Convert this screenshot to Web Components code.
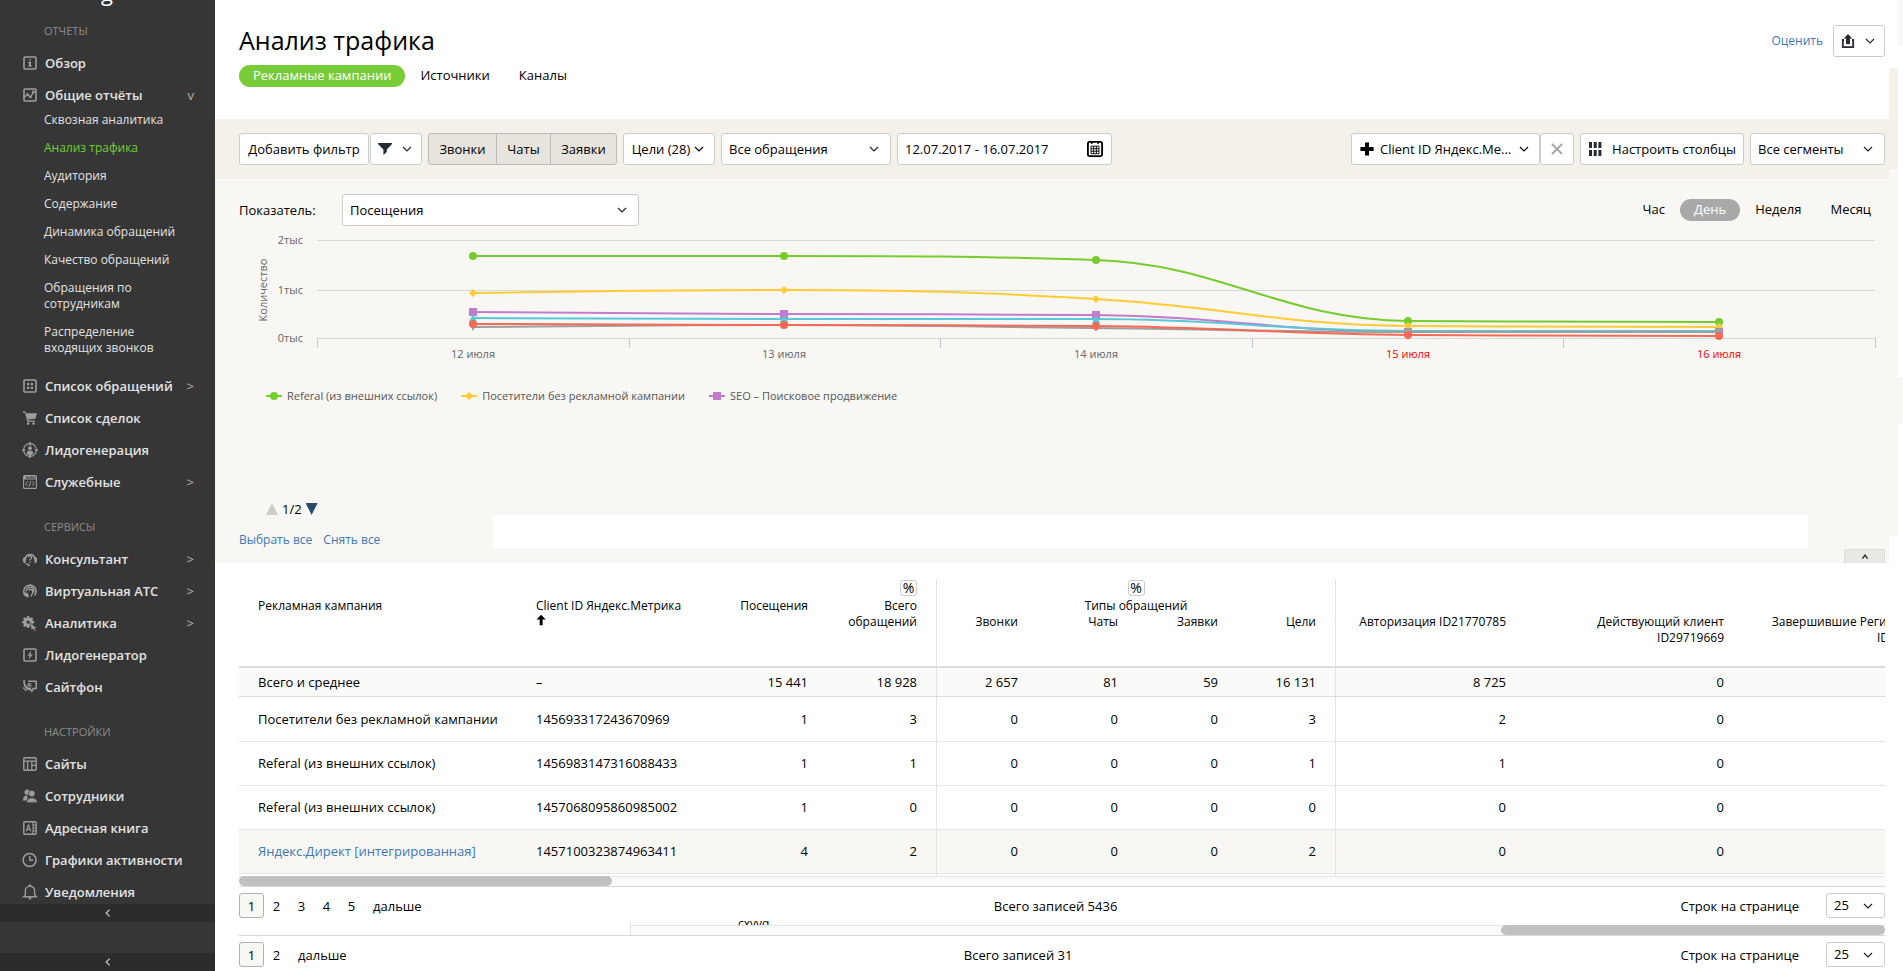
<!DOCTYPE html>
<html lang="ru">
<head>
<meta charset="utf-8">
<title>Анализ трафика</title>
<style>
  body { margin: 0; font: 13px/16px "Open Sans", "Noto Sans", sans-serif; color: #000; background: #fff; }
</style>
</head>
<body>
<traffic-app></traffic-app>

<script>
const define = (name, html, setup) => {
  const tpl = document.createElement('template');
  tpl.innerHTML = html;
  customElements.define(name, class extends HTMLElement {
    connectedCallback() {
      if (this.shadowRoot) return;
      const root = this.attachShadow({ mode: 'open' });
      root.append(tpl.content.cloneNode(true));
      if (setup) setup(this, root);
    }
  });
};

/* ---------- icons ---------- */
const S = 'fill="none" stroke="currentColor"';
const BOX = `<rect x="1" y="1" width="12" height="12" rx="1" ${S} stroke-width="1.6"/>`;
const ICONS = {
  info: BOX + `<path d="M6.2 3.2h1.8v1.4H6.2zM5.2 5.8H8v3.6h1v1.2H5V9.4h1V7h-.8z" fill="currentColor"/>`,
  graph: BOX + `<path d="M1.5 9l3-2.6 3 2.8 3-5.2" ${S} stroke-width="1.3"/><circle cx="4.5" cy="6.4" r="1.2"/><circle cx="7.5" cy="9" r="1.2"/><circle cx="10.4" cy="4" r="1.4"/>`,
  list: BOX + `<path d="M4 4h2.3v2.3H4zM7.8 4H10v2.3H7.8zM4 7.8h2.3V10H4zM7.8 7.8H10V10H7.8z"/>`,
  cart: `<path d="M0 .6h2.6l.6 1.6H14l-1.6 5.6-7.4.8.4 1H12v1.2H4.4L2 1.9H0z"/><circle cx="5.2" cy="12.6" r="1.3"/><circle cx="10.6" cy="12.6" r="1.3"/>`,
  target: `<circle cx="7" cy="7" r="6.4" ${S} stroke-width="1.1"/><circle cx="7" cy="5.2" r="1.9"/><path d="M3.6 11c0-2.4 1.400-3.400 3.400-3.400s3.400 1 3.400 3.400L7 12.800zM6.300-1h1.400v3.400H6.300zM6.300 12h1.400v3H6.300zM-1 6.300h3.200v1.400H-1zM11.800 6.300H15v1.400h-3.200z"/>`,
  code: `<rect x=".6" y=".6" width="12.800" height="12.800" rx="1" ${S} stroke-width="1.100"/><path d="M1 1h2.400v2.400H1zM4.400 1.200h4v1.400h-4zM1 3.400h12v1H1zM9.600 1h1v2h-1zM11.400 1h1v2h-1z"/><path d="M4.600 6.400L2.800 8.600l1.800 2.200M9.400 6.400l1.800 2.200-1.800 2.200M7.800 6l-1.600 5.400" ${S}/>`,
  consultant: `<path d="M2.400 8.600V6.400a4.800 4.800 0 0 1 9.400 0v2.200" ${S} stroke-width="1.600"/><path d="M0 7.200C0 5.600 1 5 2.600 5v6.600C1 11.400 0 10 0 9zM14 7.200C14 5.600 13 5 11.600 5v6.600C13 11.400 14 10 14 9z"/><path d="M5.200 5.400c.2-2.400 3.800-2 3.500.1C8.500 6.900 7 6.800 7 8.400M3.600 11.400c.6 1.400 1.800 1.800 3.400 1.800" ${S} stroke-width="1.400"/><circle cx="7" cy="10.300" r=".8"/>`,
  pbx: `<path d="M3 12.200A6.200 6.200 0 1 1 11.600 11.400M3.400 7.400A3.700 3.700 0 1 1 10.400 8.600" ${S} stroke-width="1.600"/><path d="M5.400 6.200c2.800-1.800 5.600.4 4 3.400L8 12.600" ${S} stroke-width="1.300"/><path d="M1.400 8l3.400 1.200L6 12l-1 1.600C3 13 1.600 11 1.400 8z"/>`,
  gears: `<path d="M4.200 0h1.800l.3 1.500 1.300.5L9 1.200l1.100 1.200-.7 1.300.5 1.300 1.400.3v1.600l-1.400.3-.5 1.200.6 1.300L8.800 11l-1.300-.8-1.300.5L6 12H4.200l-.3-1.300-1.300-.5-1.300.8L.1 9.700l.8-1.300L.4 7.200-1 6.900V5.300L.4 5l.5-1.300-.8-1.300L1.300 1.200 2.600 2l1.300-.5z"/><circle cx="5.100" cy="6.100" r="1.700" fill="#363636"/><path d="M7 7l6.800 4.800-2 .6 1.400 2.200-1.600.6-1.200-2.300L8.400 14z" stroke="#363636" stroke-width=".6"/>`,
  bolt: BOX + `<path d="M8.400 2.600L4.400 7.600h2.200l-.8 4 4-5.200H7.500z"/>`,
  phone: `<path d="M5 1.200h8.200v7.400h-3L8.600 12V9.400" ${S} stroke-width="1.500"/><path d="M8.200 3.800H5.600c-1 0-1 2 0 2h3" ${S} stroke-width="1.200"/><path d="M.4 0l2 .2-.6 2C2.200 4.600 3.600 6.600 5.600 7.600l2.200-.2.600 2.400-1.800.6C3 10-.4 5.600.4 0z"/><path d="M.2 7.600c.8 1.600 1.800 2.400 3.400 3" ${S} stroke-width="1.200"/>`,
  layout: `<rect x=".8" y=".8" width="12.400" height="12.400" rx="1" ${S} stroke-width="1.400"/><path d="M1 4.200h12M4.600 4.200V13M8.800 4.200V13M8.800 8.400H13" ${S} stroke-width="1.200"/>`,
  people: `<circle cx="4.200" cy="3.200" r="2.600"/><path d="M0 11.600C0 8.400 1.400 6.600 4.400 6.600v5z"/><g stroke="#363636" stroke-width=".8"><circle cx="8.800" cy="4.600" r="3.300"/><path d="M3.600 13.800c0-3 1.800-5 5.200-5s5.600 2 5.600 5z"/></g>`,
  book: `<rect x=".8" y=".8" width="12.400" height="12.400" rx="1" ${S} stroke-width="1.400"/><path d="M10 1v12M10 4h3M10 7h3M10 10h3M3.300 10.200L5.500 4l2.200 6.200M4 8.400h3" ${S} stroke-width="1.100"/>`,
  clock: `<circle cx="6.600" cy="7" r="6.500" ${S} stroke-width="1.500"/><path d="M6.800 3v4.300h3.600" ${S} stroke-width="1.400"/>`,
  bell: `<path d="M.6 11.800h12.800L11.600 9.600V5.400C11.600 3 9.600 1.400 7 1.400S2.400 3 2.400 5.400v4.200z" ${S} stroke-width="1.400"/><path d="M5.800-.6h2.400v2H5.800zM5 12.400h4L7.600 14.600H6.400z"/>`,
  down: `<path d="M3 5l4 4 4-4" ${S} stroke-width="1.200"/>`,
  up: `<path d="M4.400 8.600L7 5l2.600 3.600" ${S} stroke-width="1.300"/>`,
  left: `<path d="M8.600 3.600L5.200 7l3.400 3.400" ${S} stroke-width="1.300"/>`,
  funnel: `<path d="M0 1h14v1L8.800 7.600V10L5.400 13V7.600L0 2z"/>`,
  plus: `<path d="M5 .6h4V5h4.600v4H9v4.600H5V9H.4V5H5z"/>`,
  cross: `<path d="M2 2l10 10M12 2L2 12" ${S} stroke-width="1.800"/>`,
  columns: `<path d="M1 0h3v6H1zM5.700 0h3v6h-3zM10.400 0h3v6h-3zM1 8h3v6H1zM5.700 8h3v6h-3zM10.400 8h3v6h-3z"/>`,
  export: `<path d="M7 0l4.200 4.600H9V10H5V4.600H2.800z"/><path d="M3 6H1.800v7.200h10.400V6H11" ${S} stroke-width="1.800"/>`,
  calendar: `<rect x=".8" y=".8" width="12.400" height="12.400" rx="1.600" fill="#fff" stroke="currentColor" stroke-width="1.600"/><path d="M3.600 0h1.200v2.600H3.600zM9.200 0h1.200v2.600H9.200z"/><path d="M3.500 4.500h7v6.600h-7zM3.500 6.700h7M3.500 8.900h7M5.800 4.500v6.600M8.200 4.500v6.600" ${S} stroke-width=".8"/>`,
  sort: `<path d="M6 1l5.400 5.400H7.700V13H4.300V6.400H.6z"/>`,
};
define('ui-icon', `<style>:host{display:inline-flex;flex:none;width:14px;height:14px}svg{display:block;width:100%;height:100%;overflow:visible}</style>`,
  (el, root) => root.innerHTML += `<svg viewBox="0 0 14 14" fill="currentColor" aria-hidden="true">${ICONS[el.getAttribute('name')]}</svg>`);

/* ---------- sidebar ---------- */
define('nav-item', `<style>
  :host{display:block}
  a{display:flex;align-items:center;height:32px;padding:0 21px 0 23px;gap:8px;color:#e2e2e2;text-decoration:none;font-weight:600}
  ui-icon{color:#9d9d9d}
  span{flex:1;white-space:nowrap}
  i{font-style:normal;font-weight:400;color:#b4b4b4}
</style><a href="#"><span><slot></slot></span></a>`, (el, root) => {
  const link = root.querySelector('a');
  const icon = document.createElement('ui-icon');
  icon.setAttribute('name', el.getAttribute('icon'));
  link.prepend(icon);
  if (el.hasAttribute('mark')) {
    const i = document.createElement('i');
    i.textContent = el.getAttribute('mark');
    link.append(i);
  }
});
define('nav-sub', `<style>
  :host{display:block;padding-bottom:12px}
  a{display:block;width:144px;color:#e2e2e2;text-decoration:none;font-size:12px;line-height:16px}
  :host([active]) a{color:#6fce36}
</style><a href="#"><slot></slot></a>`);
define('nav-heading', `<style>
  :host{display:block;height:24px;padding:21px 0 0 44px;color:#8c8c8c;font-size:11px;line-height:16px}
</style><slot></slot>`);
define('side-nav', `<style>
  :host{display:flex;flex-direction:column;flex:none;width:215px;height:100vh;min-height:600px;background:#363636;color:#fff}
  nav{flex:1;min-height:0;overflow:hidden}
  .logo{display:flex;height:2px;padding-left:101px;align-items:flex-end;font-size:22px;line-height:20px}
  .subs{padding:1px 0 2px 44px}
  button{display:flex;flex:none;align-items:center;justify-content:center;height:18px;border:0;padding:0;background:#2c2c2c;color:#c4c4c4}
  .gap{flex:none;height:31px}
</style>
<nav>
  <div class="logo">g</div>
  <nav-heading>ОТЧЕТЫ</nav-heading>
  <nav-item icon="info">Обзор</nav-item>
  <nav-item icon="graph" mark="v">Общие отчёты</nav-item>
  <div class="subs">
    <nav-sub>Сквозная аналитика</nav-sub><nav-sub active>Анализ трафика</nav-sub><nav-sub>Аудитория</nav-sub>
    <nav-sub>Содержание</nav-sub><nav-sub>Динамика обращений</nav-sub><nav-sub>Качество обращений</nav-sub>
    <nav-sub>Обращения по<br>сотрудникам</nav-sub><nav-sub>Распределение<br>входящих звонков</nav-sub>
  </div>
  <nav-item icon="list" mark="&gt;">Список обращений</nav-item>
  <nav-item icon="cart">Список сделок</nav-item>
  <nav-item icon="target">Лидогенерация</nav-item>
  <nav-item icon="code" mark="&gt;">Служебные</nav-item>
  <nav-heading>СЕРВИСЫ</nav-heading>
  <nav-item icon="consultant" mark="&gt;">Консультант</nav-item>
  <nav-item icon="pbx" mark="&gt;">Виртуальная АТС</nav-item>
  <nav-item icon="gears" mark="&gt;">Аналитика</nav-item>
  <nav-item icon="bolt">Лидогенератор</nav-item>
  <nav-item icon="phone">Сайтфон</nav-item>
  <nav-heading>НАСТРОЙКИ</nav-heading>
  <nav-item icon="layout">Сайты</nav-item>
  <nav-item icon="people">Сотрудники</nav-item>
  <nav-item icon="book">Адресная книга</nav-item>
  <nav-item icon="clock">Графики активности</nav-item>
  <nav-item icon="bell">Уведомления</nav-item>
</nav>
<button aria-label="Свернуть меню"><ui-icon name="left"></ui-icon></button>
<div class="gap"></div>
<button aria-label="Свернуть панель"><ui-icon name="left"></ui-icon></button>`);

/* ---------- controls ---------- */
define('ui-button', `<style>
  :host{display:inline-flex;height:32px}
  button{flex:1;box-sizing:border-box;display:flex;align-items:center;justify-content:center;gap:var(--gap,5px);padding:0 var(--pad,8px) 1px;border:1px solid #ccc;border-radius:3px;background:#fff;color:inherit;font:inherit;white-space:nowrap}
</style><button><slot></slot></button>`, (el, root) => {
  if (el.hasAttribute('label')) root.querySelector('button').setAttribute('aria-label', el.getAttribute('label'));
});
define('ui-select', `<style>
  :host{display:inline-flex;position:relative;height:32px}
  select{appearance:none;box-sizing:border-box;width:100%;height:100%;margin:0;padding:0 28px 1px 7px;border:1px solid #ccc;border-radius:3px;background:#fff;color:inherit;font:inherit}
  ui-icon{position:absolute;right:10px;top:0;bottom:0;margin:auto;pointer-events:none;color:#222}
</style><select><option></option></select><ui-icon name="down"></ui-icon>`, (el, root) => {
  root.querySelector('option').textContent = el.getAttribute('value');
  root.querySelector('select').setAttribute('aria-label', el.getAttribute('label'));
});
define('pill-tabs', `<style>
  :host{display:flex;gap:1px}
  ::slotted(a){box-sizing:border-box;height:22px;padding:2px 14px;border-radius:11px;color:#000;text-decoration:none;line-height:16px;white-space:nowrap}
  ::slotted(a[aria-current]){background:var(--pill);color:#fff}
</style><slot></slot>`);

define('page-header', `<style>
  :host{display:flex;justify-content:space-between;height:94px;padding:25px 18px 0 24px}
  h1{margin:0 0 10px;font-size:25px;line-height:30px;font-weight:400}
  pill-tabs{--pill:#77cc38}
  .side{display:flex;align-items:center;gap:10px;height:32px}
  .side a{color:#3f78b5;text-decoration:none;font-size:12px}
  ui-button{width:52px;color:#262b33;--gap:8px;--pad:6px}
</style>
<div><h1>Анализ трафика</h1>
<pill-tabs><a href="#" aria-current="page">Рекламные кампании</a><a href="#">Источники</a><a href="#">Каналы</a></pill-tabs></div>
<div class="side"><a href="#">Оценить</a><ui-button label="Экспорт"><ui-icon name="export"></ui-icon><ui-icon name="down"></ui-icon></ui-button></div>`);

define('filter-bar', `<style>
  :host{display:flex;align-items:center;height:60px;padding:0 18px 0 24px;background:#f3f1e9;border-bottom:1px solid #fff}
  .add{width:130px;margin-right:1px}
  .funnel{width:52px;margin-right:6px;color:#262b33;--gap:8px;--pad:6px}
  .group{display:flex;margin-right:6px}
  .group button{box-sizing:border-box;height:32px;padding:0 0 1px;border:1px solid #bcbbb7;margin-right:-1px;background:#e6e4dd;font:inherit;color:#000}
  .group button:first-child{width:69px;border-radius:3px 0 0 3px}
  .group button:nth-child(2){width:55px}
  .group button:last-child{width:67px;margin:0;border-radius:0 3px 3px 0}
  .goals{width:92px;margin-right:6px;--gap:2px;--pad:4px}
  .calls{width:170px;margin-right:6px}
  .date{box-sizing:border-box;display:flex;align-items:center;width:215px;height:32px;padding:0 8px 0 7px;border:1px solid #ccc;border-radius:3px;background:#fff}
  .date input{flex:1;min-width:0;border:0;padding:0;background:none;color:#000;font:inherit}
  .date ui-icon{width:16px;height:16px}
  .client{width:188px;margin:0 1px 0 auto;--gap:6px}
  .clear{width:34px;margin-right:6px;color:#a5a5a5}
  .columns{width:164px;margin-right:6px;--gap:10px;--pad:7px}
  .columns ui-icon{color:#262b33}
  .segments{width:135px}
</style>
<ui-button class="add">Добавить фильтр</ui-button>
<ui-button class="funnel" label="Фильтры"><ui-icon name="funnel"></ui-icon><ui-icon name="down"></ui-icon></ui-button>
<div class="group"><button>Звонки</button><button>Чаты</button><button>Заявки</button></div>
<ui-button class="goals">Цели (28)<ui-icon name="down"></ui-icon></ui-button>
<ui-select class="calls" label="Обращения" value="Все обращения"></ui-select>
<label class="date"><input aria-label="Период" value="12.07.2017 - 16.07.2017"><ui-icon name="calendar"></ui-icon></label>
<ui-button class="client"><ui-icon name="plus"></ui-icon>Client ID Яндекс.Ме...<ui-icon name="down"></ui-icon></ui-button>
<ui-button class="clear" label="Убрать"><ui-icon name="cross"></ui-icon></ui-button>
<ui-button class="columns"><ui-icon name="columns"></ui-icon>Настроить столбцы</ui-button>
<ui-select class="segments" label="Сегменты" value="Все сегменты"></ui-select>`);

/* ---------- chart ---------- */
const SERIES = [
  { color: '#76cc2c', mark: 'circle', y: [30, 30, 34, 95, 96] },
  { color: '#ffcb33', mark: 'diamond', y: [67, 64, 73, 100, 101] },
  { color: '#c27ccb', mark: 'square', y: [86, 88, 89, 106, 106] },
  { color: '#57c8d8', mark: 'triangle', y: [92, 93, 93, 105, 105] },
  { color: '#9e9e9e', mark: 'down', y: [101, 99, 102, 106, 106] },
  { color: '#f56a55', mark: 'circle', y: [98, 99, 100, 109, 110] },
];
const marker = (type, x, y) => ({
  circle: `<circle cx="${x}" cy="${y}" r="4"/>`,
  diamond: `<path d="M${x} ${y - 4}l4 4-4 4-4-4z"/>`,
  square: `<path d="M${x - 4} ${y - 4}h8v8h-8z"/>`,
  triangle: `<path d="M${x} ${y - 4}l4 8h-8z"/>`,
  down: `<path d="M${x} ${y + 4}l4-8h-8z"/>`,
}[type]);
const spline = pts => {
  let d = `M${pts[0][0]} ${pts[0][1]}`, cx = pts[0][0], cy = pts[0][1];
  for (let i = 1; i < pts.length; i++) {
    const [x, y] = pts[i], [px, py] = pts[i - 1], next = pts[i + 1];
    let lx = x, ly = y, rx = x, ry = y;
    if (next) {
      lx = (1.5 * x + px) / 2.5; ly = (1.5 * y + py) / 2.5;
      rx = (1.5 * x + next[0]) / 2.5; ry = (1.5 * y + next[1]) / 2.5;
      const fix = (ry - ly) * (rx - x) / (rx - lx) + y - ry;
      ly += fix; ry += fix;
      const clampL = Math.min(Math.max(ly, Math.min(py, y)), Math.max(py, y));
      if (clampL !== ly) { ly = clampL; ry = 2 * y - ly; }
      const clampR = Math.min(Math.max(ry, Math.min(next[1], y)), Math.max(next[1], y));
      if (clampR !== ry) { ry = clampR; ly = 2 * y - ry; }
    }
    d += `C${cx} ${cy} ${lx} ${ly} ${x} ${y}`;
    cx = rx; cy = ry;
  }
  return d;
};

define('line-chart', `<style>
  :host{display:block;height:144px}
  svg{display:block;width:100%;height:144px;font-size:11px;fill:#666}
</style><svg role="img" aria-label="Количество посещений по дням"></svg>`, (el, root) => {
  const svg = root.querySelector('svg');
  const draw = () => {
    const w = el.clientWidth, left = 78, right = w - 10, step = (right - left) / 5;
    const ys = [14, 64, 112];
    const xs = [0, 1, 2, 3, 4].map(i => Math.round(left + step * (i + .5)));
    let out = ys.map((y, i) => `<path d="M${left} ${y + .5}H${right}" stroke="#d8d8d8"/><text x="64" y="${y + 4}" text-anchor="end">${2 - i}тыс</text>`).join('');
    for (let i = 0; i <= 5; i++) out += `<path d="M${Math.round(left + step * i) + .5} 112v10" stroke="#c0cad6"/>`;
    xs.forEach((x, i) => out += `<text x="${x}" y="132" text-anchor="middle" fill="${i > 2 ? '#f00' : '#666'}">${12 + i} июля</text>`);
    out += `<text transform="translate(28 64) rotate(-90)" text-anchor="middle">Количество</text>`;
    for (const s of SERIES) {
      const pts = xs.map((x, i) => [x, s.y[i]]);
      out += `<path d="${spline(pts)}" fill="none" stroke="${s.color}" stroke-width="2"/><g fill="${s.color}">${pts.map(p => marker(s.mark, ...p)).join('')}</g>`;
    }
    svg.innerHTML = out;
  };
  draw();
  new ResizeObserver(draw).observe(el);
});
define('legend-item', `<style>
  :host{display:flex;align-items:center;gap:5px;color:#555;font-size:11px;line-height:16px;white-space:nowrap}
</style><svg width="16" height="10" aria-hidden="true"></svg><slot></slot>`, (el, root) => {
  const s = SERIES[+el.getAttribute('series')];
  root.querySelector('svg').innerHTML = `<g fill="${s.color}"><path d="M0 4h16v2H0z"/>${marker(s.mark, 8, 5)}</g>`;
});
define('chart-panel', `<style>
  :host{display:block;padding:14px 18px 0 24px;background:#f8f7f3}
  .top{display:flex;align-items:center}
  .top span{width:103px;padding-bottom:1px}
  .metric{width:297px}
  pill-tabs{margin-left:auto;--pill:#a9a9a9}
  .legend{display:flex;gap:24px;margin:18px 0 96px 27px}
  .foot{display:flex;align-items:flex-start;height:63px}
  .nav{width:254px;padding-top:1px}
  .pager{display:flex;align-items:center;gap:4px;margin-bottom:15px;padding-left:27px}
  .pager button{width:12px;height:12px;padding:0;border:0;background:#ccc;clip-path:polygon(50% 0,100% 100%,0 100%)}
  .pager button:last-child{background:#274b6d;clip-path:polygon(0 0,100% 0,50% 100%)}
  .links{display:flex;gap:11px;font-size:12px}
  .links a{color:#3f78b5;text-decoration:none}
  .blank{flex:1;height:33px;margin-top:15px;background:#fff}
  .fold{width:41px;height:14px;margin:49px 0 0 36px;padding:0;display:flex;align-items:center;justify-content:center;border:1px solid #dddcd8;border-bottom:0;border-radius:3px 3px 0 0;background:#e9e8e4;color:#222}
</style>
<div class="top"><span>Показатель:</span><ui-select class="metric" label="Показатель" value="Посещения"></ui-select>
<pill-tabs><a href="#">Час</a><a href="#" aria-current="true">День</a><a href="#">Неделя</a><a href="#">Месяц</a></pill-tabs></div>
<line-chart></line-chart>
<div class="legend"><legend-item series="0">Referal (из внешних ссылок)</legend-item><legend-item series="1">Посетители без рекламной кампании</legend-item><legend-item series="2">SEO – Поисковое продвижение</legend-item></div>
<div class="foot">
  <div class="nav"><div class="pager"><button aria-label="Назад"></button><span>1/2</span><button aria-label="Вперёд"></button></div>
  <div class="links"><a href="#">Выбрать все</a><a href="#">Снять все</a></div></div>
  <div class="blank"></div>
  <button class="fold" aria-label="Свернуть график"><ui-icon name="up"></ui-icon></button>
</div>`);

/* ---------- table ---------- */
const ROWS = [
  ['Посетители без рекламной кампании', '145693317243670969', 1, 3, 0, 0, 0, 3, 2, 0, ''],
  ['Referal (из внешних ссылок)', '1456983147316088433', 1, 1, 0, 0, 0, 1, 1, 0, ''],
  ['Referal (из внешних ссылок)', '1457068095860985002', 1, 0, 0, 0, 0, 0, 0, 0, ''],
  ['<a href="#">Яндекс.Директ [интегрированная]</a>', '1457100323874963411', 4, 2, 0, 0, 0, 2, 0, 0, ''],
];
const cells = r => r.map(c => `<td>${c}</td>`).join('');
define('report-table', `<style>
  :host{display:block;margin:16px 18px 0 24px;overflow:hidden}
  table{table-layout:fixed;width:1717px;border-collapse:separate;border-spacing:0}
  th,td{box-sizing:border-box;padding:0 19px 0 0;text-align:right;white-space:nowrap}
  th{font-size:12px;line-height:16px;font-weight:500;vertical-align:top}
  th:nth-child(-n+2):not(.sub),td:nth-child(-n+2){padding-left:19px;text-align:left}
  thead tr:first-child{height:35px}
  thead tr:last-child{height:54px}
  .tall{border-bottom:2px solid #ddd;padding-top:19px}
  th.pct{padding-top:1px}
  th.group{text-align:center;padding:1px 0 0}
  .sub{border-bottom:2px solid #ddd}
  .pct button,.group button{box-sizing:border-box;display:block;width:17px;height:16px;margin:0 0 2px auto;padding:0;border:1px solid #ccc;border-radius:3px;background:#fff;color:#000;font:14px/14px "Open Sans",sans-serif}
  .group button{margin:0 auto 2px}
  td{height:44px;border-bottom:1px solid #e4e4e4}
  .sum td{height:29px;background:#fafaf8;border-color:#ddd}
  .sum + tr td{height:45px}
  .sum + tr ~ tr:not(.tail) td{padding-bottom:2px}
  .hot td{background:#f8f7f3}
  .tail td{height:2px;border-bottom:0}
  .line,td:nth-child(4),td:nth-child(8){border-right:1px solid #e4e4e4}
  ui-icon{display:block;width:12px;height:12px}
  a{color:#3f78b5;text-decoration:none}
</style>
<table>
<colgroup><col style="width:278px"><col style="width:200px"><col style="width:110px"><col style="width:110px"><col style="width:100px"><col style="width:100px"><col style="width:100px"><col style="width:99px"><col style="width:189px"><col style="width:218px"><col style="width:213px"></colgroup>
<thead>
<tr><th class="tall" rowspan="2">Рекламная кампания</th><th class="tall" rowspan="2">Client ID Яндекс.Метрика<ui-icon name="sort"></ui-icon></th><th class="tall" rowspan="2">Посещения</th>
<th class="tall pct line" rowspan="2"><button>%</button>Всего<br>обращений</th><th class="group line" colspan="4"><button>%</button>Типы обращений</th><th colspan="3"></th></tr>
<tr><th class="sub">Звонки</th><th class="sub">Чаты</th><th class="sub">Заявки</th><th class="sub line">Цели</th><th class="sub">Авторизация ID21770785</th><th class="sub">Действующий клиент<br>ID29719669</th><th class="sub">Завершившие Регистрацию<br>ID2971967</th></tr>
</thead>
<tbody></tbody></table>`, (el, root) => {
  root.querySelector('tbody').innerHTML =
    `<tr class="sum">${cells(['Всего и среднее', '–', '15 441', '18 928', '2 657', '81', '59', '16 131', '8 725', '0', ''])}</tr>` +
    ROWS.map((r, i) => `<tr${i === 3 ? ' class="hot"' : ''}>${cells(r)}</tr>`).join('') +
    `<tr class="tail">${'<td></td>'.repeat(11)}</tr>`;
});
define('scroll-track', `<style>
  :host{box-sizing:border-box;display:flex;height:11px;background:#fafaf9;border-top:1px solid #e4e4e4;border-bottom:1px solid #d8d8d8}
  :host([end]){justify-content:flex-end}
  div{width:var(--thumb);height:10px;margin-top:-1px;border-radius:5px;background:#c1c1c1}
</style><div></div>`);
define('table-pager', `<style>
  :host{display:flex;align-items:center;justify-content:space-between;height:25px;padding:6px 0 0}
  nav{display:flex;align-items:center;padding-right:8px}
  nav ::slotted(a){box-sizing:border-box;min-width:25px;height:25px;border:1px solid transparent;border-radius:3px;text-align:center;color:#000;text-decoration:none;line-height:24px}
  nav ::slotted(a[aria-current]){border-color:#b0b0b0;background:#f7f7f4}
  nav ::slotted(a:last-of-type){padding-left:8px}
  .rows{display:flex;align-items:center;gap:27px}
  ui-select{width:59px;height:25px}
</style><nav><slot></slot></nav><span><slot name="total"></slot></span>
<div class="rows"><span>Строк на странице</span><ui-select label="Строк на странице" value="25"></ui-select></div>`);

define('edge-strips', `<style>
  :host{position:absolute;top:0;right:0;width:14px;height:536px;pointer-events:none}
  .outer{position:absolute;right:0;width:5px;top:0;height:100%;background:linear-gradient(#f8f8f8 46px,#fff 46px 377px,#f8f7f3 377px 424px,#fff 424px)}
  .inner{position:absolute;left:0;width:9px;top:68px;bottom:0;background:linear-gradient(#f3f1e9 102px,#fff 102px 103px,#f8f7f3 103px)}
  .rest{position:absolute;right:0;top:536px;width:14px;height:27px;background:#fff}
</style><div class="outer"></div><div class="inner"></div><div class="rest"></div>`);

define('traffic-app', `<style>
  :host{display:flex;position:relative;height:100vh;overflow:hidden}
  main{flex:1;min-width:0}
  .scroll{display:block;margin:0 18px 0 24px}
  .one{--thumb:373px}
  table-pager{margin:0 18px 0 24px}
  .under{display:grid;grid-template-columns:391px 1fr;height:14px;margin:3px 18px 0 24px;border-bottom:1px solid #d8d8d8}
  .under>div:last-child{border-left:1px solid #e4e4e4}
  .peek{display:flex;align-items:flex-start;height:4px;padding-left:107px;overflow:hidden;font-size:12px;line-height:6px}
  .under scroll-track{--thumb:384px;height:10px;border-bottom:0}
</style>
<side-nav></side-nav>
<main>
  <page-header></page-header>
  <filter-bar></filter-bar>
  <chart-panel></chart-panel>
  <report-table></report-table>
  <div class="scroll"><scroll-track class="one"></scroll-track></div>
  <table-pager><a href="#" aria-current="page">1</a><a href="#">2</a><a href="#">3</a><a href="#">4</a><a href="#">5</a><a href="#">дальше</a><span slot="total">Всего записей 5436</span></table-pager>
  <div class="under"><div></div><div><div class="peek">cxvvd</div><scroll-track end></scroll-track></div></div>
  <table-pager><a href="#" aria-current="page">1</a><a href="#">2</a><a href="#">дальше</a><span slot="total">Всего записей 31</span></table-pager>
</main>
<edge-strips></edge-strips>`);
</script>
</body>
</html>
